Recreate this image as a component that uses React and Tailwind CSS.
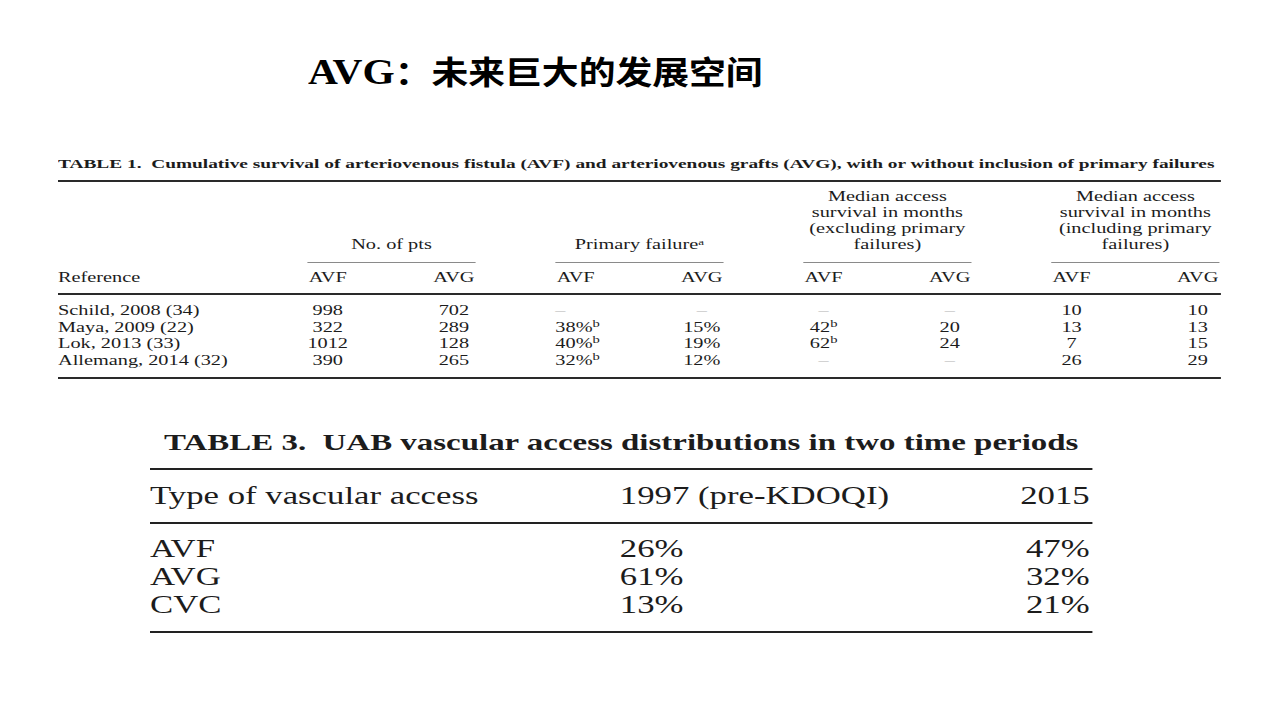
import React from 'react';

const serif = "font-[family-name:'Liberation_Serif','Noto_Sans_CJK_SC',serif]";

const groups = [
  { label: ['No. of pts'], left: false },
  { label: ['Primary failure'], sup: 'a', left: true },
  { label: ['Median access', 'survival in months', '(excluding primary', 'failures)'], left: false },
  { label: ['Median access', 'survival in months', '(including primary', 'failures)'], left: false },
];

// reference, then AVF/AVG for each of the four groups
const survival = [
  ['Schild, 2008 (34)', '998', '702', '–', '–', '–', '–', '10', '10'],
  ['Maya, 2009 (22)', '322', '289', ['38%', 'b'], '15%', ['42', 'b'], '20', '13', '13'],
  ['Lok, 2013 (33)', '1012', '128', ['40%', 'b'], '19%', ['62', 'b'], '24', '7', '15'],
  ['Allemang, 2014 (32)', '390', '265', ['32%', 'b'], '12%', '–', '–', '26', '29'],
];

const distribution = [
  ['AVF', '26%', '47%'],
  ['AVG', '61%', '32%'],
  ['CVC', '13%', '21%'],
];

function Value({ v }) {
  if (v === '–') return <span className="text-[#b4b4b4]">–</span>;
  if (Array.isArray(v))
    return (
      <span>
        {v[0]}
        <sup className="text-[10px]">{v[1]}</sup>
      </span>
    );
  return <span>{v}</span>;
}

function Pair({ a, b, left }) {
  return (
    <div className="w-[116px] flex justify-between">
      <div className={left ? 'w-[28px] flex justify-start whitespace-nowrap' : 'w-[28px] flex justify-center whitespace-nowrap'}>
        <Value v={a} />
      </div>
      <div className="w-[30px] flex justify-center whitespace-nowrap">
        <Value v={b} />
      </div>
    </div>
  );
}

function SurvivalTable() {
  return (
    <div className="ml-[58px] w-[802px] origin-left scale-x-[1.45] text-[14px] text-[#1c1c1c]">
      <p className="text-[13.35px] leading-[16px] font-bold whitespace-nowrap">
        TABLE 1.&nbsp; Cumulative survival of arteriovenous fistula (AVF) and arteriovenous grafts (AVG), with or without inclusion of primary failures
      </p>
      <div className="mt-[8px] border-t-2 border-[#2a2a2a]" />
      <div className="pt-[7px] flex">
        <div className="w-[172px] flex items-end leading-[16.4px]">Reference</div>
        <div className="flex gap-[55px]">
          {groups.map((g, i) => (
            <div key={i} className="w-[116px] flex flex-col">
              <div className="h-[64.8px] flex flex-col justify-end items-center text-center leading-[16.2px] whitespace-nowrap">
                {g.label.map((line, j) => (
                  <span key={j}>
                    {line}
                    {g.sup && j === g.label.length - 1 ? <sup className="text-[9px]">{g.sup}</sup> : null}
                  </span>
                ))}
              </div>
              <div className="mt-[9px] h-px bg-[#8a8a8a]" />
              <div className="mt-[6.6px] flex justify-between leading-[16.4px]">
                <span className="w-[28px] text-center">AVF</span>
                <span className="w-[30px] text-center">AVG</span>
              </div>
            </div>
          ))}
        </div>
      </div>
      <div className="mt-[7px] border-t-2 border-[#2a2a2a]" />
      <div className="pt-[7.6px] flex flex-col leading-[16.6px]">
        {survival.map((r, i) => (
          <div key={i} className="flex">
            <div className="w-[172px] whitespace-nowrap">{r[0]}</div>
            <div className="flex gap-[55px]">
              {groups.map((g, j) => (
                <Pair key={j} a={r[1 + j * 2]} b={r[2 + j * 2]} left={g.left} />
              ))}
            </div>
          </div>
        ))}
      </div>
      <div className="mt-[7.5px] border-t-2 border-[#2a2a2a]" />
    </div>
  );
}

function DistributionTable() {
  return (
    <div className="mt-[49.3px] ml-[150px] w-[678px] origin-left scale-x-[1.39] text-[25px] text-[#1c1c1c]">
      <p className="text-[23.7px] leading-[28px] font-bold text-center whitespace-nowrap">
        TABLE 3.&nbsp; UAB vascular access distributions in two time periods
      </p>
      <div className="mt-[11.5px] border-t-[2.5px] border-[#222]" />
      <div className="pt-[12.6px] grid grid-cols-[338px_1fr_auto] pr-[2px] leading-[28px]">
        <span>Type of vascular access</span>
        <span>1997 (pre-KDOQI)</span>
        <span>2015</span>
      </div>
      <div className="mt-[11.9px] border-t-[2.5px] border-[#222]" />
      <div className="pt-[10.9px] grid grid-cols-[338px_1fr_auto] pr-[2px] leading-[28px]">
        {distribution.map((r) => (
          <React.Fragment key={r[0]}>
            <span>{r[0]}</span>
            <span>{r[1]}</span>
            <span className="text-right">{r[2]}</span>
          </React.Fragment>
        ))}
      </div>
      <div className="mt-[12.1px] border-t-[2.5px] border-[#222]" />
    </div>
  );
}

export default function App() {
  return (
    <div className={`w-full h-[720px] overflow-hidden bg-white ${serif}`}>
      <div className="pt-[49.5px]">
        <h1 className="h-[48px] ml-[308px] origin-left scale-x-[1.15] text-[32px] leading-[44px] font-bold text-black whitespace-nowrap">
          <span className="text-[36px]">AVG</span>：未来巨大的发展空间
        </h1>
      </div>
      <div className="mt-[58.2px]">
        <SurvivalTable />
      </div>
      <DistributionTable />
    </div>
  );
}
